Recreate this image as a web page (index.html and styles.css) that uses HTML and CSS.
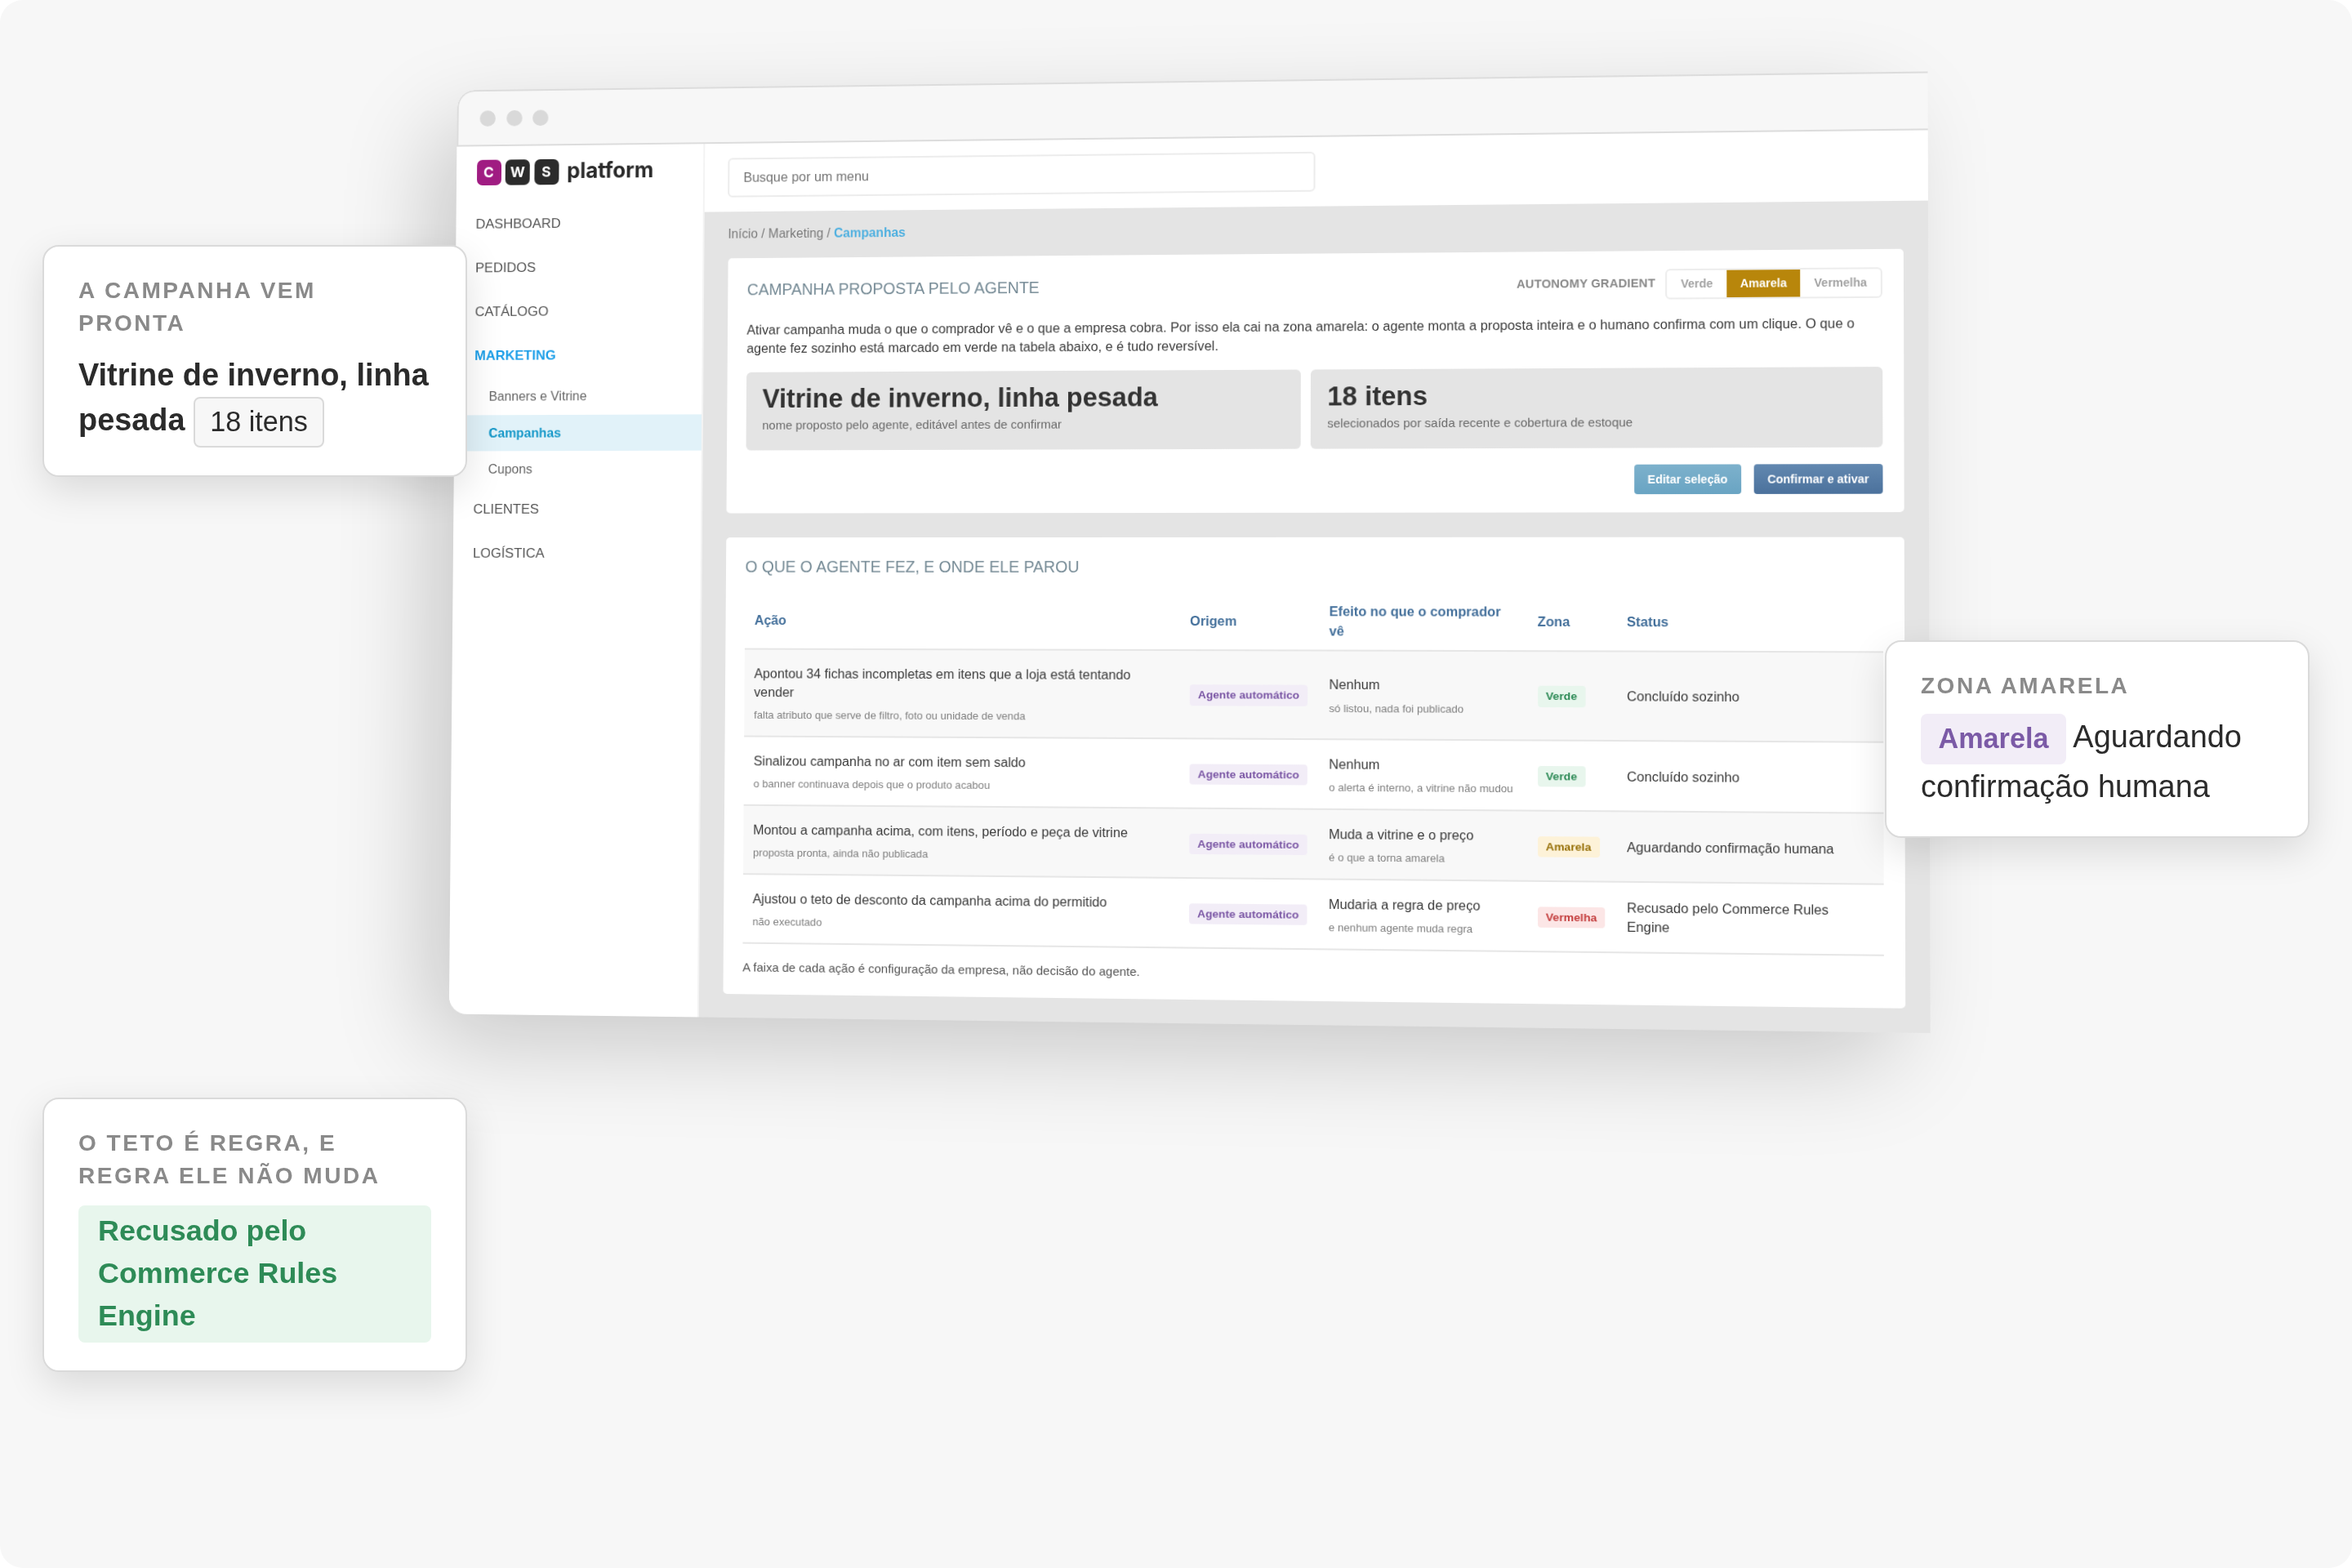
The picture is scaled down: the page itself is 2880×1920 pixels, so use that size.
FILE: index.html
```html
<!DOCTYPE html>
<html lang="pt-BR">
<head>
    <meta charset="UTF-8">
    <meta name="viewport" content="width=device-width, initial-scale=1.0">
    <title>CWS platform - Campanhas</title>
    <link rel="stylesheet" href="styles.css">
</head>
<body>

    <div class="stage">
        <div class="window">
            <div class="titlebar">
                <span class="dot"></span>
                <span class="dot"></span>
                <span class="dot"></span>
            </div>
            <div class="app">
                <aside class="sidebar">
                    <div class="logo">
                        <span class="tile tile-pink">C</span>
                        <span class="tile">W</span>
                        <span class="tile">S</span>
                        <span class="logo-name">platform</span>
                    </div>
                    <nav class="menu">
                        <a class="item">DASHBOARD</a>
                        <a class="item">PEDIDOS</a>
                        <a class="item">CATÁLOGO</a>
                        <a class="item open">MARKETING</a>
                        <a class="sub">Banners e Vitrine</a>
                        <a class="sub active">Campanhas</a>
                        <a class="sub">Cupons</a>
                        <a class="item">CLIENTES</a>
                        <a class="item">LOGÍSTICA</a>
                    </nav>
                </aside>

                <div class="main">
                    <header class="topbar">
                        <div class="search">Busque por um menu</div>
                    </header>
                    <div class="content">
                        <div class="breadcrumb">Início / Marketing / <b>Campanhas</b></div>

                        <section class="panel">
                            <div class="panel-head">
                                <h2>CAMPANHA PROPOSTA PELO AGENTE</h2>
                                <div class="gradient">
                                    <span class="gradient-label">AUTONOMY GRADIENT</span>
                                    <div class="segments">
                                        <span>Verde</span>
                                        <span class="on">Amarela</span>
                                        <span>Vermelha</span>
                                    </div>
                                </div>
                            </div>
                            <p class="intro">Ativar campanha muda o que o comprador vê e o que a empresa cobra. Por isso ela cai na zona amarela: o agente monta a proposta inteira e o humano confirma com um clique. O que o agente fez sozinho está marcado em verde na tabela abaixo, e é tudo reversível.</p>
                            <div class="stats">
                                <div class="stat">
                                    <strong>Vitrine de inverno, linha pesada</strong>
                                    <span>nome proposto pelo agente, editável antes de confirmar</span>
                                </div>
                                <div class="stat">
                                    <strong>18 itens</strong>
                                    <span>selecionados por saída recente e cobertura de estoque</span>
                                </div>
                            </div>
                            <div class="actions">
                                <button class="btn btn-light">Editar seleção</button>
                                <button class="btn btn-dark">Confirmar e ativar</button>
                            </div>
                        </section>

                        <section class="panel">
                            <h2>O QUE O AGENTE FEZ, E ONDE ELE PAROU</h2>
                            <table>
                                <colgroup>
                                    <col class="col-acao">
                                    <col class="col-origem">
                                    <col class="col-efeito">
                                    <col class="col-zona">
                                    <col>
                                </colgroup>
                                <thead>
                                    <tr>
                                        <th>Ação</th>
                                        <th>Origem</th>
                                        <th>Efeito no que o comprador vê</th>
                                        <th>Zona</th>
                                        <th>Status</th>
                                    </tr>
                                </thead>
                                <tbody>
                                    <tr>
                                        <td>Apontou 34 fichas incompletas em itens que a loja está tentando vender<small>falta atributo que serve de filtro, foto ou unidade de venda</small></td>
                                        <td><span class="tag agent">Agente automático</span></td>
                                        <td>Nenhum<small>só listou, nada foi publicado</small></td>
                                        <td><span class="tag green">Verde</span></td>
                                        <td>Concluído sozinho</td>
                                    </tr>
                                    <tr>
                                        <td>Sinalizou campanha no ar com item sem saldo<small>o banner continuava depois que o produto acabou</small></td>
                                        <td><span class="tag agent">Agente automático</span></td>
                                        <td>Nenhum<small>o alerta é interno, a vitrine não mudou</small></td>
                                        <td><span class="tag green">Verde</span></td>
                                        <td>Concluído sozinho</td>
                                    </tr>
                                    <tr>
                                        <td>Montou a campanha acima, com itens, período e peça de vitrine<small>proposta pronta, ainda não publicada</small></td>
                                        <td><span class="tag agent">Agente automático</span></td>
                                        <td>Muda a vitrine e o preço<small>é o que a torna amarela</small></td>
                                        <td><span class="tag yellow">Amarela</span></td>
                                        <td>Aguardando confirmação humana</td>
                                    </tr>
                                    <tr>
                                        <td>Ajustou o teto de desconto da campanha acima do permitido<small>não executado</small></td>
                                        <td><span class="tag agent">Agente automático</span></td>
                                        <td>Mudaria a regra de preço<small>e nenhum agente muda regra</small></td>
                                        <td><span class="tag red">Vermelha</span></td>
                                        <td>Recusado pelo Commerce Rules Engine</td>
                                    </tr>
                                </tbody>
                            </table>
                            <p class="note">A faixa de cada ação é configuração da empresa, não decisão do agente.</p>
                        </section>
                    </div>
                </div>
            </div>
        </div>

        <div class="callout callout-campaign">
            <h3>A CAMPANHA VEM PRONTA</h3>
            <p><b>Vitrine de inverno, linha pesada</b> <span class="chip">18 itens</span></p>
        </div>

        <div class="callout callout-zone">
            <h3>ZONA AMARELA</h3>
            <p><span class="chip chip-purple">Amarela</span> Aguardando confirmação humana</p>
        </div>

        <div class="callout callout-rule">
            <h3>O TETO É REGRA, E REGRA ELE NÃO MUDA</h3>
            <div class="rule">Recusado pelo Commerce Rules Engine</div>
        </div>
    </div>

</body>
</html>
```

FILE: styles.css
```css
* {
    box-sizing: border-box;
}

body {
    margin: 0;
    background: #fff;
    font-family: "Liberation Sans", Arial, sans-serif;
    color: #2b2b2b;
}

h2, h3, p {
    margin: 0;
}

.stage {
    position: relative;
    width: 2880px;
    height: 1920px;
    overflow: hidden;
    background: #f7f7f7;
    border-radius: 28px;
}

/* browser window, tilted in perspective */
.window {
    position: absolute;
    top: 0;
    left: 0;
    width: 1800px;
    height: 1154px;
    display: flex;
    flex-direction: column;
    overflow: hidden;
    background: #fff;
    border-radius: 22px 0 0 22px;
    box-shadow: -36px 40px 120px -8px rgba(0, 0, 0, 0.2);
    transform-origin: 0 0;
    transform: matrix3d(0.948722, -0.0147, 0, -0.00002183944, -0.012312, 0.972208, 0, -0.000006335931, 0, 0, 1, 0, 560, 110.5, 0, 1);
}

.titlebar {
    flex: none;
    height: 71px;
    display: flex;
    align-items: center;
    gap: 13.6px;
    padding-left: 27px;
    background: #f7f7f7;
    border: 2px solid #dcdcdc;
    border-right: 0;
    border-radius: 22px 0 0 0;
}

.dot {
    width: 20px;
    height: 20px;
    border-radius: 50%;
    background: #d9d9d9;
}

.app {
    flex: 1;
    display: flex;
}

.sidebar {
    width: 314px;
    border-right: 2px solid #f3f3f3;
    background: #fff;
}

.logo {
    display: flex;
    align-items: center;
    gap: 5.5px;
    height: 69.5px;
    padding: 0 0 3px 25.5px;
}

.tile {
    width: 31px;
    height: 32px;
    border-radius: 7px;
    background: #2b2b2b;
    color: #fff;
    font: bold 18px/32px Inter, sans-serif;
    text-align: center;
}

.tile-pink {
    background: #a01c82;
}

.logo-name {
    margin: -4px 0 0 5px;
    font: 700 26.5px/32px Inter, sans-serif;
}

.menu {
    display: flex;
    flex-direction: column;
}

.item {
    height: 55.2px;
    padding-left: 25px;
    font-size: 17px;
    line-height: 55.2px;
    color: #555;
}

.item.open {
    font-weight: bold;
    color: #1e9fe8;
    margin-bottom: 1px;
}

.sub {
    height: 45.3px;
    padding-left: 43.5px;
    font-size: 16.2px;
    line-height: 45.3px;
    color: #666;
}

.sub.active {
    background: #e1f2f9;
    color: #1899c9;
    font-weight: bold;
}

.main {
    flex: 1;
    display: flex;
    flex-direction: column;
    background: #e4e4e4;
}

.topbar {
    height: 85px;
    padding: 17.5px 29px;
    background: #fff;
}

.search {
    width: 725px;
    height: 49px;
    padding-left: 17.5px;
    border: 2px solid #ececec;
    border-radius: 6px;
    font-size: 16.4px;
    line-height: 44px;
    color: #757575;
}

.content {
    padding: 0 29.5px;
}

.breadcrumb {
    height: 57.5px;
    font-size: 15.7px;
    line-height: 55px;
    color: #7a7a7a;
}

.breadcrumb b {
    color: #4fb0e0;
}

.panel {
    padding: 22px 24.5px;
    border-radius: 5px;
    background: #fff;
}

.panel + .panel {
    margin-top: 30.5px;
}

h2 {
    font-size: 19.6px;
    font-weight: normal;
    line-height: 29px;
    color: #758a95;
}

.panel-head {
    display: flex;
    justify-content: space-between;
    align-items: center;
    height: 37px;
}

.panel-head h2 {
    margin-top: -2px;
}

.gradient {
    display: flex;
    align-items: center;
    gap: 12px;
}

.gradient-label {
    margin-top: -2px;
    font-size: 14.4px;
    font-weight: bold;
    letter-spacing: 0.2px;
    color: #888;
}

.segments {
    display: flex;
    height: 37px;
    border: 2px solid #ededed;
    border-radius: 6px;
    overflow: hidden;
}

.segments span {
    padding: 0 16.2px;
    font-size: 14px;
    font-weight: bold;
    line-height: 33px;
    color: #a3a3a3;
}

.segments .on {
    background: #b8860b;
    color: #fff;
}

.intro {
    margin-top: 19px;
    font-size: 16.26px;
    line-height: 23.4px;
    color: #3a3a3a;
}

.stats {
    display: grid;
    grid-template-columns: 1fr 1fr;
    gap: 12.5px;
    margin-top: 18px;
}

.stat {
    height: 96.5px;
    padding: 14px 20px;
    border-radius: 6px;
    background: #e4e4e4;
}

.stat strong {
    display: block;
    font-size: 32.5px;
    line-height: 39px;
    color: #333;
}

.stat span {
    display: block;
    margin-top: 1.5px;
    font-size: 15px;
    line-height: 21px;
    color: #6b6b6b;
}

.actions {
    display: flex;
    justify-content: flex-end;
    gap: 14.5px;
    margin-top: 20px;
}

.btn {
    height: 36px;
    padding: 0 16.3px;
    border: 0;
    border-radius: 4px;
    font: bold 14px/36px "Liberation Sans", Arial, sans-serif;
    color: #fff;
}

.btn-light {
    background: linear-gradient(#7db1cc, #69a4c3);
}

.btn-dark {
    background: linear-gradient(#6288b0, #4b719c);
}

table {
    width: 100%;
    margin-top: 13px;
    border-collapse: collapse;
    table-layout: fixed;
}

.col-acao { width: 537px; }
.col-origem { width: 169px; }
.col-efeito { width: 250.5px; }
.col-zona { width: 106.5px; }

th, td {
    padding: 17.5px 12px 16px;
    border-bottom: 2px solid #e6e6e6;
    text-align: left;
    vertical-align: middle;
    font-size: 16.24px;
    line-height: 23.4px;
    color: #3a3a3a;
}

th {
    padding: 15px 12px 11px;
    color: #44709b;
}

tbody tr:nth-child(odd) {
    background: #f8f8f8;
}

small {
    display: block;
    margin-top: 7px;
    font-size: 13.15px;
    line-height: 19px;
    color: #808080;
}

.tag {
    display: inline-block;
    padding: 0 10px;
    border-radius: 4px;
    font-size: 13.7px;
    font-weight: bold;
    line-height: 25.5px;
    white-space: nowrap;
}

.agent { background: #f2edf7; color: #7b57a5; }
.green { background: #e8f6ed; color: #2e8b57; }
.yellow { background: #fdf2d8; color: #977008; }
.red { background: #fce6e6; color: #c43e3e; }

.note {
    margin-top: 18px;
    font-size: 15px;
    line-height: 21.5px;
    color: #555;
}

/* cards floating over the window */
.callout {
    position: absolute;
    width: 520px;
    padding: 34px 42px;
    border: 2px solid #dadada;
    border-radius: 20px;
    background: #fff;
    box-shadow: 0 16px 48px rgba(0, 0, 0, 0.12);
}

.callout-campaign { top: 300px; left: 52px; }
.callout-zone { top: 784px; left: 2308px; }
.callout-rule { top: 1344px; left: 52px; }

h3 {
    padding-right: 20px;
    font-size: 28px;
    line-height: 40px;
    letter-spacing: 2.52px;
    color: #8a8a8a;
}

.callout p {
    margin-top: 16px;
    font-size: 37.9px;
    line-height: 54px;
}

.callout-zone p {
    margin-top: 14px;
}

.chip {
    display: inline-block;
    height: 62px;
    padding: 0 18px;
    border: 2px solid #dadada;
    border-radius: 8px;
    background: #f7f7f7;
    font-size: 34.2px;
    line-height: 57px;
    vertical-align: middle;
}

.chip-purple {
    padding: 0 21.5px;
    border: 0;
    background: #f2edf7;
    color: #7b5aa6;
    font-weight: bold;
    line-height: 60px;
}

.rule {
    margin-top: 16px;
    padding: 5px 22px 7px 24px;
    border-radius: 8px;
    background: #e8f6ed;
    color: #2e8b57;
    font-size: 35.9px;
    font-weight: bold;
    line-height: 52px;
}
```
